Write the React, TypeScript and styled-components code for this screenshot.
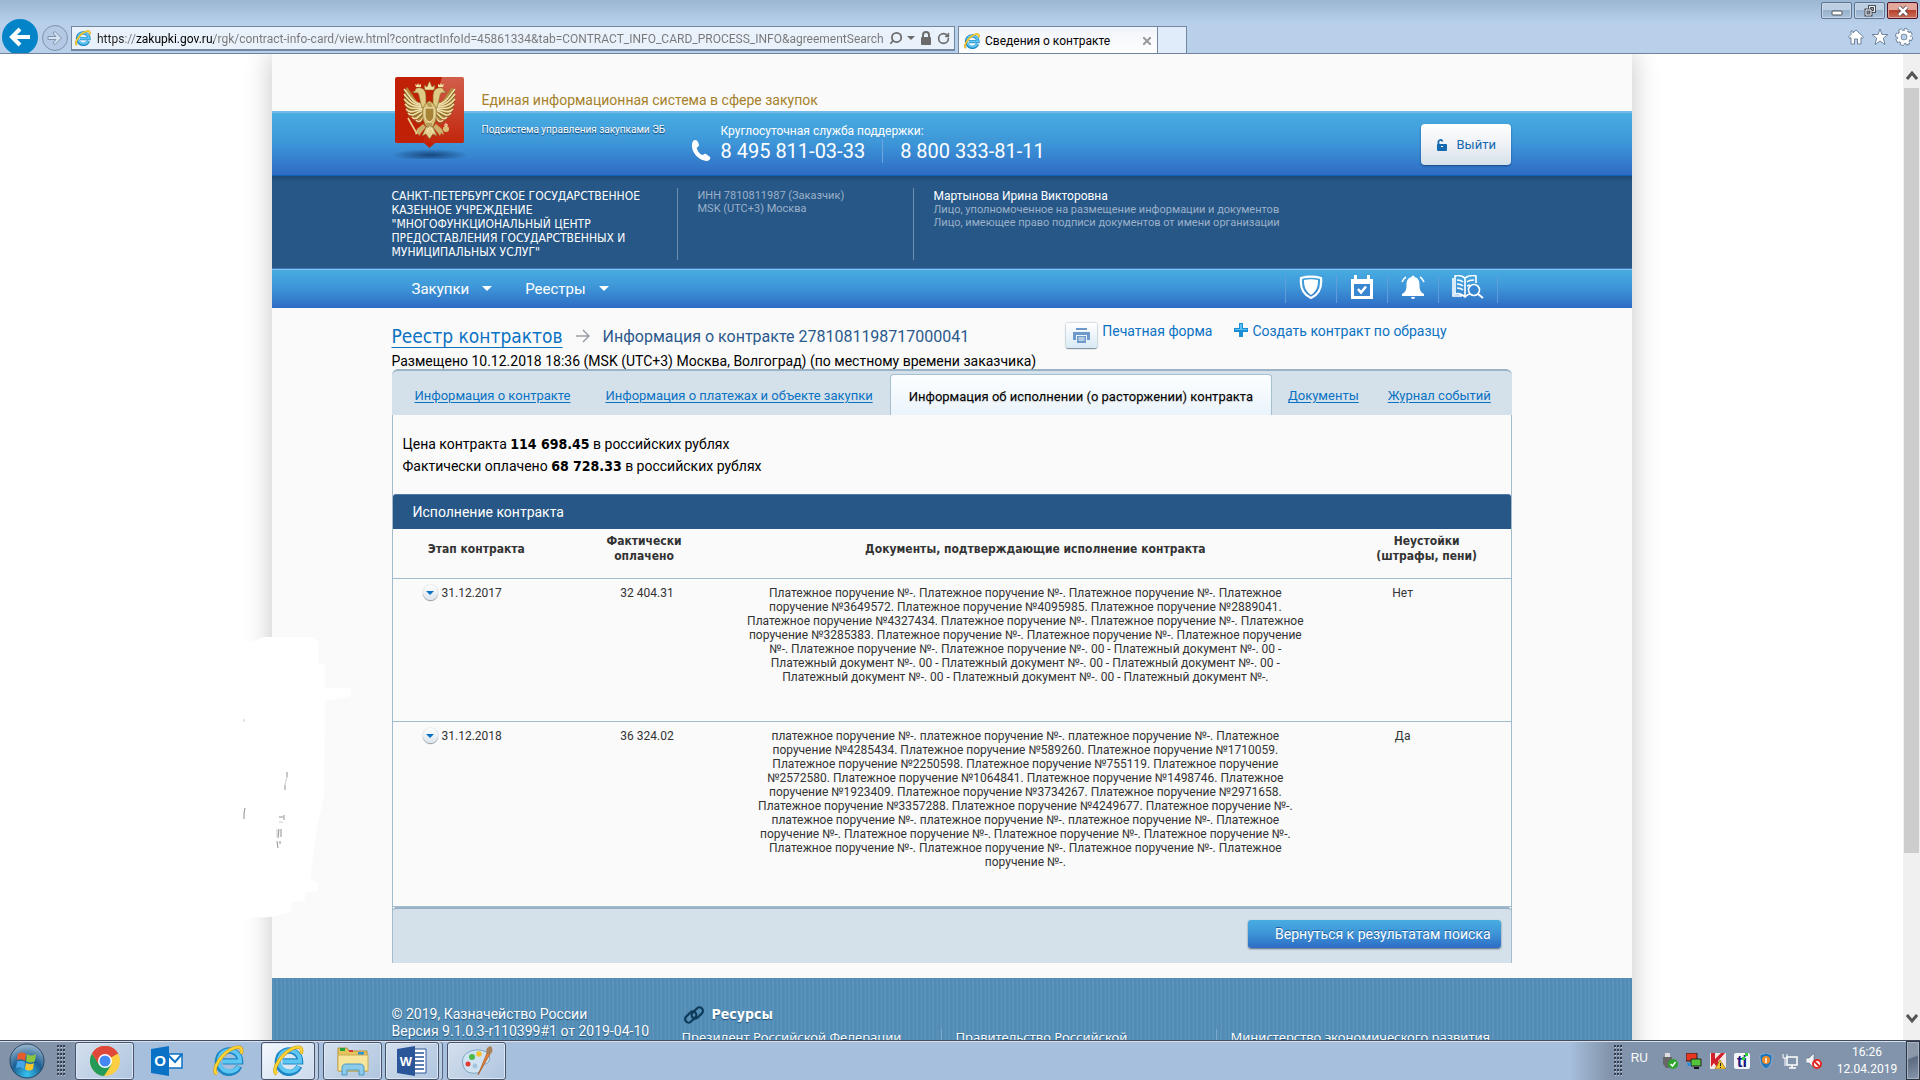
import React from "react";
import styled, { createGlobalStyle, css } from "styled-components";
import { Search, RotateCw } from "lucide-react";

const wide = '"DejaVu Sans Condensed", "DejaVu Sans", sans-serif';
const text = 'Roboto, "Open Sans", sans-serif';
const alt = '"Liberation Sans", Arial, sans-serif';
const sky = "linear-gradient(#48ade1, #3e97d8 45%, #2e6cc5)";

const Global = createGlobalStyle`
  * { box-sizing: border-box; }
  body { margin: 0; font-family: ${text}; font-size: 12px; color: #000; background: #fff; }
  button { font: inherit; border: 0; padding: 0; cursor: pointer; background: none; color: inherit; }
  svg { display: block; flex: none; }
  b, th { font-family: ${wide}; }
`;

const Screen = styled.div`
  display: flex;
  flex-direction: column;
  height: 100vh;
  overflow: hidden;
`;

/* ---------- browser frame ---------- */
const Chrome = styled.header`
  flex: none;
  background: linear-gradient(#9bb7d2, #b9d0eb 24px);
  border-bottom: 1px solid #71839b;
`;
const WindowControls = styled.div`
  display: flex;
  justify-content: flex-end;
  gap: 2px;
  height: 19px;
  padding: 2px 2px 0;
`;
const WindowButton = styled.button<{ $close?: boolean }>`
  display: flex;
  align-items: center;
  justify-content: center;
  width: 31px;
  height: 17px;
  border: 1px solid ${(p) => (p.$close ? "#4c1420" : "#5d7591")};
  border-radius: 2px;
  box-shadow: inset 0 0 0 1px ${(p) => (p.$close ? "#e2a29a" : "#c6d6e8")};
  background: ${(p) =>
    p.$close
      ? "linear-gradient(#e4a79c 45%, #b8412c 50%, #c9705c)"
      : "linear-gradient(#bccfe3 45%, #98b1cb 50%, #a9c3de)"};
`;
const BrowserBar = styled.div`
  display: flex;
  height: 34px;
  overflow: hidden;
`;
const BackButton = styled.button`
  flex: none;
  width: 36px;
  height: 36px;
  margin-left: 2px;
  border-radius: 50%;
  background: #0383c8;
  display: grid;
  place-items: center;
`;
const ForwardButton = styled.button`
  flex: none;
  width: 26px;
  height: 26px;
  margin: 6px 3px 0 4px;
  border: 1px solid #7e93ae;
  border-radius: 50%;
  background: #b4c9e3;
  display: grid;
  place-items: center;
`;
const AddressBar = styled.form`
  flex: 0 1 884px;
  display: flex;
  align-items: center;
  gap: 4px;
  height: 25px;
  margin-top: 7px;
  padding: 0 4px 0 3px;
  border: 1px solid #7487a0;
  border-bottom-width: 2px;
  background: #e9f1fb;
  color: #6b6b6b;
`;
const AddressInput = styled.input`
  flex: 1;
  min-width: 0;
  padding: 2px 0 0 2px;
  border: 0;
  outline: 0;
  font: 12px ${text};
  color: transparent;
  background: linear-gradient(90deg, #222 29px, #777 29px, #777 41px, #000 41px, #000 119px, #777 119px);
  background-clip: text;
`;
const FlippedSearch = styled(Search)`
  transform: scaleX(-1);
`;
const BrowserTab = styled.div`
  display: flex;
  align-items: center;
  gap: 5px;
  flex: 0 1 200px;
  height: 28px;
  margin: 7px 0 0 3px;
  padding: 0 6px 0 5px;
  border: 1px solid #7487a0;
  border-bottom: 0;
  background: linear-gradient(#f0f4fb, #fff);
  button { margin-left: auto; }
`;
const NewTab = styled.button`
  width: 29px;
  height: 28px;
  margin-top: 7px;
  border: 1px solid #7487a0;
  border-left: 0;
  background: #e0ecf9;
`;
const BrowserTools = styled.div`
  display: flex;
  align-items: center;
  gap: 6px;
  margin-left: auto;
  padding: 2px 7px 0 0;
`;

/* ---------- page frame ---------- */
const Viewport = styled.div`
  flex: 1;
  min-height: 0;
  display: flex;
  overflow: hidden;
`;
const Canvas = styled.div`
  position: relative;
  flex: 1;
  min-width: 0;
  background: #fff;
`;
const Page = styled.div`
  max-width: 1360px;
  margin: 0 auto;
  background: #fafafa;
  box-shadow: 0 0 26px rgba(0, 0, 0, 0.24);
`;
const Inner = styled.div`
  max-width: 1120px;
  margin: 0 auto;
`;
const Scrollbar = styled.div`
  flex: none;
  width: 17px;
  display: flex;
  flex-direction: column;
  align-items: center;
  padding: 14px 0;
  background: #f0f0f0;
`;
const ScrollThumb = styled.div`
  width: 15px;
  flex: 0 1 765px;
  margin: 4px 0 auto;
  background: #cdcdcd;
`;
const Smudge = styled.svg`
  position: absolute;
  left: 230px;
  top: 576px;
`;

/* ---------- site header ---------- */
const Masthead = styled.div`
  background: linear-gradient(#fafafa 57px, #70bbe7 57px, #70bbe7 59px, #48ade1 59px, #3e97d8 88px, #2e6cc5 121px, #0c62b2 121px);
`;
const MastheadRow = styled(Inner)`
  display: flex;
  height: 122px;
`;
const LogoBox = styled.div`
  width: 82px;
  padding-top: 23px;
`;
const Brand = styled.div`
  padding: 37px 0 0 8px;
  color: #fff;
`;
const BrandTitle = styled.div`
  font-size: 14px;
  line-height: 18px;
  color: #a5812b;
`;
const BrandRow = styled.div`
  display: flex;
  padding-top: 13px;
`;
const Subsystem = styled.div`
  width: 209px;
  padding-top: 1px;
  font-size: 10px;
  line-height: 14px;
  text-shadow: 0 1px 1px #0a3c70;
`;
const PhoneIcon = styled.svg`
  margin-top: 17px;
`;
const Support = styled.div`
  margin: 1px 0 0 10px;
  line-height: 16px;
`;
const Phones = styled.div`
  display: flex;
  font-size: 20px;
  line-height: 24px;
  span + span {
    margin-left: 17px;
    padding-left: 17px;
    border-left: 1px solid #6fa5e0;
  }
`;
const LogoutButton = styled.button`
  display: flex;
  align-items: center;
  gap: 10px;
  width: 90px;
  height: 41px;
  margin: 70px 1px 0 auto;
  padding-left: 15px;
  border-radius: 4px;
  font-size: 13px;
  color: #1469b0;
  background: linear-gradient(#fff, #eef1f6 50%, #d5e2ea);
  box-shadow: 0 1px 2px rgba(0, 40, 90, 0.6);
`;
const UserBar = styled.div`
  background: linear-gradient(#1f4974, #265787 6px);
  color: #fff;
`;
const UserRow = styled(Inner)`
  display: flex;
  padding: 12px 0 8px;
`;
const UserCell = styled.div<{ $w?: number }>`
  ${(p) => p.$w && css`width: ${p.$w}px;`}
  min-height: 72px;
  padding-top: 1px;
  line-height: 14px;
  & + & {
    padding-left: 20px;
    border-left: 1px solid #6e8fb0;
  }
`;
const OrgName = styled.div`
  max-width: 262px;
  font-family: ${wide};
`;
const Muted = styled.div`
  font-size: 11px;
  line-height: 13px;
  color: #9cb1c9;
`;
const NavBar = styled.nav`
  border-top: 1px solid #3c78bb;
  box-shadow: inset 0 1px #86c2ef;
  background: ${sky};
`;
const NavRow = styled(Inner)`
  display: flex;
  align-items: center;
  height: 39px;
  padding: 0 14px 0 20px;
`;
const NavItem = styled.button`
  display: flex;
  align-items: center;
  gap: 13px;
  margin-right: 33px;
  font-size: 15px;
  color: #fff;
`;
const NavIcons = styled.div`
  display: flex;
  margin-left: auto;
`;
const NavIcon = styled.button<{ $w: number }>`
  display: flex;
  justify-content: center;
  width: ${(p) => p.$w}px;
  height: 28px;
  border-left: 1px solid #5f9edb;
  &:last-child { border-right: 1px solid #5f9edb; }
`;

/* ---------- contract card ---------- */
const HeadingRow = styled.div`
  display: flex;
  height: 46px;
  padding: 15px 65px 0 0;
`;
const Crumbs = styled.div`
  display: flex;
  align-items: center;
  gap: 13px;
  height: 26px;
  font-size: 16px;
  color: #2a598c;
`;
const CrumbLink = styled.a`
  font-family: ${wide};
  font-size: 19px;
  color: #0a72c3;
  text-underline-offset: 4px;
`;
const Actions = styled.div`
  display: flex;
  gap: 22px;
  margin-left: auto;
  font-size: 14px;
  line-height: 17px;
`;
const Action = styled.a<{ $gap: number }>`
  display: flex;
  gap: ${(p) => p.$gap}px;
  color: #0a72c3;
  text-decoration: none;
`;
const PrintTile = styled.span`
  display: grid;
  place-items: center;
  width: 31px;
  height: 25px;
  border-radius: 2px;
  background: linear-gradient(#fff, #d8eaf5);
  box-shadow: 0 0 2px #8c99a5, 0 1px 1px #7f8b96;
`;
const Placed = styled.div`
  font-size: 14px;
  line-height: 15px;
`;
const Tabs = styled.div`
  display: flex;
  height: 46px;
  padding: 3px 0 0 23px;
  border-top: 2px solid #9bb4c5;
  border-radius: 6px 6px 0 0;
  background: #d5e1ea;
  font-size: 13px;
`;
const Tab = styled.a<{ $gap: number }>`
  margin-right: ${(p) => p.$gap}px;
  line-height: 43px;
  color: #0a72c3;
  text-underline-offset: 2px;
  white-space: nowrap;
`;
const ActiveTab = styled.div`
  margin: 0 16px 0 -18px;
  padding: 0 18px;
  border: 1px solid #a6bfce;
  border-bottom: 0;
  border-radius: 4px 4px 0 0;
  background: linear-gradient(#fcfeff, #eaf4fb);
  line-height: 43px;
  white-space: nowrap;
  text-shadow: 0 1px 1px #bbb;
`;
const Card = styled.div`
  border: solid #a3bccb;
  border-width: 0 1px;
`;
const Totals = styled.div`
  padding: 18px 10px 17px;
  font-size: 14px;
  line-height: 22px;
`;
const SectionTitle = styled.h2`
  margin: 0;
  padding-left: 20px;
  border-top: 1px solid #4c7ba5;
  border-radius: 3px 3px 0 0;
  background: #265787;
  color: #fff;
  font-size: 14px;
  font-weight: 400;
  line-height: 34px;
`;
const Table = styled.table`
  width: 100%;
  table-layout: fixed;
  border-collapse: collapse;
  color: #333;
  text-align: center;
`;
const Th = styled.th`
  padding: 5px 30px 14px;
  border-bottom: 1px solid #a3bccb;
  line-height: 15px;
  &:nth-child(3), &:last-child { padding: 5px 0 14px; }
`;
const Td = styled.td`
  padding: 7px 0 37px;
  border-bottom: 1px solid #a3bccb;
  line-height: 14px;
  vertical-align: top;
  white-space: nowrap;
  &:nth-child(2) { padding-left: 6px; }
  &:nth-child(3) { padding-right: 20px; }
  &:last-child { padding-right: 48px; }
`;
const Stage = styled.div`
  display: flex;
  align-items: center;
  gap: 4px;
  height: 13px;
  padding-left: 30px;
`;
const Toggle = styled.button`
  display: grid;
  place-items: center;
  width: 15px;
  height: 15px;
  border-radius: 50%;
  background: linear-gradient(#fff, #dde5ec);
  box-shadow: 0 1px 1px #8a949c, 0 0 1px #8a949c;
`;
const CardFooter = styled.div`
  display: flex;
  justify-content: flex-end;
  height: 56px;
  padding: 11px 10px 0;
  border-top: 2px solid #98b2c3;
  border-radius: 4px 4px 0 0;
  background: #d5e1ea;
`;
const ReturnButton = styled.button`
  height: 28px;
  padding: 0 10px 0 27px;
  border-radius: 3px;
  background: ${sky};
  box-shadow: 0 1px 2px #5a6b7d;
  color: #fff;
  font-size: 14px;
  text-shadow: 0 -1px #1f5a9c;
`;
const SiteFooter = styled.footer`
  height: 120px;
  margin-top: 15px;
  padding-top: 28px;
  background: repeating-linear-gradient(90deg, #568fb8 0 3px, #4e89b2 3px 4px, #5a94bc 4px 6px, #528cb5 6px 8px);
  color: #fff;
  font-size: 14px;
  line-height: 17px;
  text-shadow: 0 1px 1px #1c4f78;
`;
const FooterRow = styled(Inner)`
  display: grid;
  grid-template-columns: 290px 1fr;
`;
const Resources = styled.b`
  display: flex;
  align-items: center;
  gap: 7px;
  height: 17px;
  margin-bottom: 6px;
`;
const FooterLinks = styled.div`
  display: grid;
  grid-template-columns: 259px 275px 1fr;
  font-family: "Noto Sans", "Open Sans", sans-serif;
  font-size: 13px;
  a { color: #fff; text-decoration: none; white-space: nowrap; }
  a + a { padding-left: 14px; border-left: 1px solid #78aace; }
`;

/* ---------- taskbar ---------- */
const Taskbar = styled.footer`
  flex: none;
  display: flex;
  align-items: center;
  height: 40px;
  border-top: 1px solid #444b5c;
  box-shadow: inset 0 1px #d6e1ef;
  background: linear-gradient(90deg, #8293aa 70px, #a6bfdc 115px, #a6bfdc calc(100% - 350px), #8294ab calc(100% - 310px));
`;
const StartButton = styled.button`
  margin: 0 12px 0 9px;
`;
const TaskButtons = styled.div`
  display: flex;
  gap: 3px;
  margin-left: 9px;
`;
const TaskButton = styled.button<{ $open?: boolean; $active?: boolean; $stack?: boolean }>`
  display: grid;
  place-items: center;
  width: 59px;
  height: 38px;
  border-radius: 3px;
  ${(p) =>
    p.$open &&
    css`
      border: 1px solid #47536a;
      box-shadow: inset 0 0 0 1px #dce7f3;
      background: ${p.$active
        ? "linear-gradient(135deg, #f4f8fc, #c9d9ec)"
        : "linear-gradient(135deg, #d3dfed, #afc5df)"};
    `}
  ${(p) =>
    p.$stack &&
    css`
      width: 54px;
      margin-right: 5px;
      box-shadow: inset 0 0 0 1px #dce7f3, 3px 0 #b7cbe2, 4px 0 #596780;
    `}
`;
const Tray = styled.div`
  display: flex;
  align-items: center;
  margin-left: auto;
  height: 100%;
  color: #fff;
`;
const Language = styled.span`
  margin: -6px 14px 0 8px;
  font: 12px ${alt};
`;
const TrayIcons = styled.div`
  display: flex;
  gap: 8px;
`;
const Clock = styled.time`
  width: 70px;
  margin: 0 4px 0 10px;
  line-height: 17px;
  text-align: center;
`;
const ShowDesktop = styled.button`
  width: 14px;
  height: 100%;
  border: 1px solid #2e3542;
  box-shadow: inset 0 0 0 1px #a6b3c4;
  background: linear-gradient(160deg, #8a98aa 40%, #5d6b80 45%, #8696ab);
`;

/* ---------- drawings ---------- */
const IeLogo = ({ size = 16 }: { size?: number }) => (
  <svg width={size} height={size} viewBox="0 0 32 32" fill="none">
    <path d="M27 22a11.500 11.500 0 1 1 1-5H10" stroke="#1d86c4" strokeWidth="6.500" />
    <path d="M26.500 22a11 11 0 1 1 1.500-5H10" stroke="#5ec6f2" strokeWidth="4" />
    <path d="M4 30C-3 26 10 7 22 3c6-2 9 0 7 6" stroke="#c99712" strokeWidth="3.600" />
    <path d="M4 30C-3 26 10 7 22 3c6-2 9 0 7 6" stroke="#fcd437" strokeWidth="2.400" />
  </svg>
);

const featherTips = [[9, 12], [9, 17], [9, 22], [10, 27], [11, 32], [13, 36], [17, 40], [21, 43]];

const EagleHalf = () => (
  <g>
    <path d="M12 10c-2 3-3 8-2 13 1 9 6 16 14 21l8-9-4-16-4 7c-3-2-7-9-12-16z" fill="#b08c3c" />
    {featherTips.map(([x, y], i) => (
      <g key={i}>
        <path d={`M${x} ${y}C${x + 5} ${y + 6} ${x + 9} ${28 + i} 31 ${28 + i}`} stroke="#efe0ac" strokeWidth="1.600" />
        <path d={`M${x} ${y + 2}C${x + 5} ${y + 8} ${x + 9} ${30 + i} 31 ${30 + i}`} stroke="#80601f" strokeWidth="1" />
      </g>
    ))}
    <path d="M31 32V20c0-4-1-8-5-9-3-1-6 0-6 3l-3 1 3 1c2-1 4 0 4 3l3 12z" fill="#dfc985" stroke="#80601f" strokeWidth="0.600" />
    <path d="M21 10l-1-3 2 1 1-2 1 2 2-1v3z" fill="#f0dfa2" />
    <path d="M28 47l-6 5-2 6 3-2 1 3 2-3 5-6z" fill="#cbb069" />
  </g>
);

const Emblem = () => (
  <svg width="82" height="82" viewBox="-3 0 82 82" fill="none">
    <defs>
      <radialGradient id="drop">
        <stop offset="0" stopColor="#113c70" stopOpacity=".85" />
        <stop offset="1" stopColor="#113c70" stopOpacity="0" />
      </radialGradient>
      <linearGradient id="shine" x1="0" y1="0" x2="0" y2="1">
        <stop offset="0" stopColor="#fff" stopOpacity=".55" />
        <stop offset="1" stopColor="#fff" stopOpacity=".05" />
      </linearGradient>
    </defs>
    <ellipse cx="35" cy="78" rx="38" ry="6" fill="url(#drop)" />
    <path d="M2 0h65a2 2 0 0 1 2 2v62a2 2 0 0 1-2 2H40l-5.500 5-5.500-5H2a2 2 0 0 1-2-2V2a2 2 0 0 1 2-2z" fill="#c02106" />
    <path d="M47 0h20a2 2 0 0 1 2 2v62a2 2 0 0 1-2 2H28z" fill="url(#shine)" opacity=".5" />
    <EagleHalf />
    <g transform="matrix(-1 0 0 1 69 0)"><EagleHalf /></g>
    <path d="M34.500 24c-5 2-8 8-7 15 1 6 3 11 7 14 4-3 6-8 7-14 1-7-2-13-7-15z" fill="#d8bf78" stroke="#80601f" strokeWidth="0.600" />
    <path d="M30 31h9v8c0 3-2 5-4.500 6-2.500-1-4.500-3-4.500-6z" fill="#a88436" stroke="#f4e7bb" />
    <path d="M30 13l-1-5 3 2 2.500-6 2.500 6 3-2-1 5z" fill="#f0dfa2" stroke="#80601f" strokeWidth="0.500" />
    <path d="M31 50l-4 9 4-2 3.500 5 3.500-5 4 2-4-9z" fill="#e3cf90" stroke="#80601f" strokeWidth="0.600" />
    <path d="M13 41l9 16" stroke="#e3cf90" strokeWidth="1.600" />
    <circle cx="51" cy="52" r="3" fill="#d8bf78" />
    <path d="M51 46v4m-2-2h4M32 55l3-6 3 6" stroke="#f4e7bb" />
    <path d="M32 27h4M33 29h4M31 47h6M32 49h5" stroke="#80601f" strokeWidth="0.700" />
  </svg>
);

const Caret = ({ color = "#fff", w = 10 }: { color?: string; w?: number }) => (
  <svg width={w} height={w / 2} viewBox="0 0 10 5"><path d="M0 0h10L5 5z" fill={color} /></svg>
);

const Grip = () => (
  <svg width="9" height="32" viewBox="0 0 9 32">
    {[0, 1, 2, 3, 4, 5, 6, 7].map((r) =>
      [0, 1, 2].map((c) => (
        <g key={`${r}-${c}`}>
          <rect x={c * 3 + 1} y={r * 4 + 1} width="1" height="2" fill="#c3cedb" />
          <rect x={c * 3} y={r * 4} width="2" height="2" fill="#343e4e" />
        </g>
      ))
    )}
  </svg>
);

/* ---------- data ---------- */
const stages = [
  {
    date: "31.12.2017",
    paid: "32 404.31",
    penalty: "Нет",
    docs: [
      "Платежное поручение №-. Платежное поручение №-. Платежное поручение №-. Платежное",
      "поручение №3649572. Платежное поручение №4095985. Платежное поручение №2889041.",
      "Платежное поручение №4327434. Платежное поручение №-. Платежное поручение №-. Платежное",
      "поручение №3285383. Платежное поручение №-. Платежное поручение №-. Платежное поручение",
      "№-. Платежное поручение №-. Платежное поручение №-. 00 - Платежный документ №-. 00 -",
      "Платежный документ №-. 00 - Платежный документ №-. 00 - Платежный документ №-. 00 -",
      "Платежный документ №-. 00 - Платежный документ №-. 00 - Платежный документ №-.",
    ],
  },
  {
    date: "31.12.2018",
    paid: "36 324.02",
    penalty: "Да",
    docs: [
      "платежное поручение №-. платежное поручение №-. платежное поручение №-. Платежное",
      "поручение №4285434. Платежное поручение №589260. Платежное поручение №1710059.",
      "Платежное поручение №2250598. Платежное поручение №755119. Платежное поручение",
      "№2572580. Платежное поручение №1064841. Платежное поручение №1498746. Платежное",
      "поручение №1923409. Платежное поручение №3734267. Платежное поручение №2971658.",
      "Платежное поручение №3357288. Платежное поручение №4249677. Платежное поручение №-.",
      "платежное поручение №-. платежное поручение №-. платежное поручение №-. Платежное",
      "поручение №-. Платежное поручение №-. Платежное поручение №-. Платежное поручение №-.",
      "Платежное поручение №-. Платежное поручение №-. Платежное поручение №-. Платежное",
      "поручение №-.",
    ],
  },
];

const BrowserFrame = () => (
  <Chrome>
    <WindowControls>
      <WindowButton aria-label="Свернуть">
        <svg width="12" height="12"><rect x="1" y="6" width="10" height="4" rx="1" fill="#fff" stroke="#4b4f58" /></svg>
      </WindowButton>
      <WindowButton aria-label="Восстановить">
        <svg width="12" height="12" fill="none">
          <path d="M5.500 1.500h5v5h-5z" stroke="#4b4f58" strokeWidth="3" /><path d="M5.500 1.500h5v5h-5z" stroke="#fff" />
          <path d="M2 5h5v5H2z" fill="#7d93ad" stroke="#4b4f58" strokeWidth="3" /><path d="M2 5h5v5H2z" stroke="#fff" />
        </svg>
      </WindowButton>
      <WindowButton $close aria-label="Закрыть">
        <svg width="12" height="12"><path d="M2 2l8 8M10 2l-8 8" stroke="#4b3c46" strokeWidth="4" /><path d="M2 2l8 8M10 2l-8 8" stroke="#fff" strokeWidth="2.500" /></svg>
      </WindowButton>
    </WindowControls>
    <BrowserBar>
      <BackButton aria-label="Назад">
        <svg width="22" height="20" viewBox="0 0 22 20" fill="none" stroke="#fff" strokeWidth="4"><path d="M3 10h18M11 2l-8 8 8 8" /></svg>
      </BackButton>
      <ForwardButton aria-label="Вперед">
        <svg width="16" height="16" viewBox="0 0 16 16" fill="#d5e2f1" stroke="#7e93ae"><path d="M1 6.500h8L6 3l2-1.500L14.500 8 8 14.500 6 13l3-3.500H1z" /></svg>
      </ForwardButton>
      <AddressBar>
        <IeLogo />
        <AddressInput
          aria-label="Адрес"
          readOnly
          value="https://zakupki.gov.ru/rgk/contract-info-card/view.html?contractInfoId=45861334&tab=CONTRACT_INFO_CARD_PROCESS_INFO&agreementSearch"
        />
        <FlippedSearch size={14} strokeWidth={3} />
        <Caret color="#6b6b6b" w={8} />
        <svg width="14" height="14" viewBox="3 0 14 14"><rect x="5" y="6" width="10" height="8" rx="1" fill="#6b6b6b" /><path d="M7 7V4a3 3 0 0 1 6 0v3" fill="none" stroke="#6b6b6b" strokeWidth="2" /></svg>
        <RotateCw size={13} strokeWidth={3} />
      </AddressBar>
      <BrowserTab>
        <IeLogo />
        <span>Сведения о контракте</span>
        <button aria-label="Закрыть вкладку">
          <svg width="8" height="8"><path d="M0 0l8 8M8 0L0 8" stroke="#999" strokeWidth="2" /></svg>
        </button>
      </BrowserTab>
      <NewTab aria-label="Новая вкладка" />
      <BrowserTools>
        <button aria-label="Домой">
          <svg width="18" height="18" viewBox="0 0 18 18" fill="#fff" stroke="#71849d"><path d="M9 2l7.500 7-1 1.500L14 9.500V16h-3.500v-5h-3v5H4V9.500l-1.500 1L1.500 9 4 6.500V3h2v2z" /></svg>
        </button>
        <button aria-label="Избранное">
          <svg width="18" height="18" viewBox="0 0 18 18" fill="#fff" stroke="#71849d"><path d="M9 1l2 5.500h6l-4.700 3.700L14 16.500 9 13l-5 3.500 1.700-6.300L1 6.500h6z" /></svg>
        </button>
        <button aria-label="Сервис">
          <svg width="18" height="18" viewBox="0 0 18 18" fill="none">
            <circle cx="9" cy="9" r="7" stroke="#71849d" strokeWidth="4" strokeDasharray="3.500 2" /><circle cx="9" cy="9" r="5" stroke="#71849d" strokeWidth="5" />
            <circle cx="9" cy="9" r="6.500" stroke="#fff" strokeWidth="3" strokeDasharray="2.600 2.500" /><circle cx="9" cy="9" r="4.800" stroke="#fff" strokeWidth="3" />
          </svg>
        </button>
      </BrowserTools>
    </BrowserBar>
  </Chrome>
);

const SiteHeader = () => (
  <>
    <Masthead>
      <MastheadRow>
        <LogoBox><Emblem /></LogoBox>
        <Brand>
          <BrandTitle>Единая информационная система в сфере закупок</BrandTitle>
          <BrandRow>
            <Subsystem>Подсистема управления закупками ЭБ</Subsystem>
            <PhoneIcon width="20" height="22" viewBox="0 0 20 22">
              <path d="M2 2c2-2 4-1 5 1l1 3c0 2-3 2-2 4 1 3 3 5 5 6 2 0 2-2 4-1l4 3c1 2-1 4-4 4C8 21 0 14 1 5z" fill="#fff" />
            </PhoneIcon>
            <Support>
              Круглосуточная служба поддержки:
              <Phones><span>8 495 811-03-33</span><span>8 800 333-81-11</span></Phones>
            </Support>
          </BrandRow>
        </Brand>
        <LogoutButton>
          <svg width="11" height="12" viewBox="0 0 11 12"><rect x="1" y="5" width="10" height="7" rx="1" fill="#1469b0" /><path d="M2.500 6V3.500a2 2 0 0 1 4-1" fill="none" stroke="#1469b0" strokeWidth="1.800" /><rect x="5" y="7" width="2" height="1" fill="#fff" /></svg>
          Выйти
        </LogoutButton>
      </MastheadRow>
    </Masthead>
    <UserBar>
      <UserRow>
        <UserCell $w={285}>
          <OrgName>САНКТ-ПЕТЕРБУРГСКОЕ ГОСУДАРСТВЕННОЕ КАЗЕННОЕ УЧРЕЖДЕНИЕ "МНОГОФУНКЦИОНАЛЬНЫЙ ЦЕНТР ПРЕДОСТАВЛЕНИЯ ГОСУДАРСТВЕННЫХ И МУНИЦИПАЛЬНЫХ УСЛУГ"</OrgName>
        </UserCell>
        <UserCell $w={236}>
          <Muted>ИНН 7810811987 (Заказчик)</Muted>
          <Muted>MSK (UTC+3) Москва</Muted>
        </UserCell>
        <UserCell>
          <div>Мартынова Ирина Викторовна</div>
          <Muted>Лицо, уполномоченное на размещение информации и документов</Muted>
          <Muted>Лицо, имеющее право подписи документов от имени организации</Muted>
        </UserCell>
      </UserRow>
    </UserBar>
    <NavBar>
      <NavRow>
        <NavItem>Закупки <Caret /></NavItem>
        <NavItem>Реестры <Caret /></NavItem>
        <NavIcons>
          <NavIcon $w={51} aria-label="Контроль">
            <svg width="24" height="24" viewBox="0 0 24 24"><path d="M2 3c7-2 13-2 20 0 1 9-1 16-10 20C3 19 1 12 2 3z" fill="none" stroke="#fff" strokeWidth="2.200" /><path d="M5 5c5-1 9-1 14 0 0 6-1 11-7 15C6 16 5 11 5 5z" fill="#fff" /></svg>
          </NavIcon>
          <NavIcon $w={51} aria-label="Календарь">
            <svg width="24" height="24" viewBox="0 0 24 24"><path d="M1 4h3V0h3v4h10V0h3v4h3v20H1z" fill="#fff" /><path d="M4 9h16v12H4z" fill="#3986d1" /><path d="M8 14l3 3.500 5-6" fill="none" stroke="#fff" strokeWidth="2.600" /></svg>
          </NavIcon>
          <NavIcon $w={51} aria-label="Уведомления">
            <svg width="24" height="24" viewBox="0 0 24 24" fill="#fff"><path d="M10.500 2a1.500 1.500 0 0 1 3 0c4 1 5 4 5 8 0 5 1 7 4.500 9v2H1v-2c3.500-2 4.500-4 4.500-9 0-4 1-7 5-8zM10 22h4a2 2 0 0 1-4 0z" /><path d="M5 2C3 3 2 5 1 7m18-5c2 1 3 3 4 5" stroke="#fff" strokeWidth="1.600" fill="none" /></svg>
          </NavIcon>
          <NavIcon $w={60} aria-label="Справочник">
            <svg width="32" height="24" viewBox="0 0 32 24" fill="none" stroke="#fff" strokeWidth="1.600"><path d="M13 3C10 1 6 0 3 1v18c4-1 7 0 10 3 2-2 4-3 5-3M13 3v19M13 3c3-2 7-3 11-2v7M1 3v18h9M5 5c2 0 4 0 6 2M5 9c2 0 4 0 6 2M5 13c2 0 4 0 6 2M15 7c2-2 4-2 7-2M15 11l3-1" /><circle cx="22" cy="15" r="5.500" fill="#3986d1" /><path d="M26 19l5 4" strokeWidth="2" /></svg>
          </NavIcon>
        </NavIcons>
      </NavRow>
    </NavBar>
  </>
);

const ContractCard = () => (
  <Inner as="main">
    <HeadingRow>
      <Crumbs>
        <CrumbLink href="#registry">Реестр контрактов</CrumbLink>
        <svg width="14" height="14" viewBox="0 0 14 14" fill="none" stroke="#9aa0a5" strokeWidth="1.500"><path d="M0 7h13M7 1l6 6-6 6" /></svg>
        <span>Информация о контракте 2781081198717000041</span>
      </Crumbs>
      <Actions>
        <Action $gap={5} href="#print">
          <PrintTile>
            <svg width="17" height="15" viewBox="0 0 17 15" fill="#6d9acb"><path d="M3 0h11v2H3zM0 4h17v8h-3V7H3v5H0z" /><path d="M4 8h9v7H4z" /><path d="M5.500 10h6M5.500 12h6" stroke="#fff" /></svg>
          </PrintTile>
          Печатная форма
        </Action>
        <Action $gap={4} href="#create">
          <svg width="14" height="14" viewBox="0 0 14 14"><path d="M5 0h4v5h5v4H9v5H5V9H0V5h5z" fill="#1b8fd6" /><path d="M6 1h2v5h5v1H1V6h5z" fill="#5cc0f0" /></svg>
          Создать контракт по образцу
        </Action>
      </Actions>
    </HeadingRow>
    <Placed>Размещено 10.12.2018 18:36 (MSK (UTC+3) Москва, Волгоград) (по местному времени заказчика)</Placed>
    <Tabs>
      <Tab $gap={35} href="#info">Информация о контракте</Tab>
      <Tab $gap={35} href="#payments">Информация о платежах и объекте закупки</Tab>
      <ActiveTab>Информация об исполнении (о расторжении) контракта</ActiveTab>
      <Tab $gap={29} href="#docs">Документы</Tab>
      <Tab $gap={0} href="#log">Журнал событий</Tab>
    </Tabs>
    <Card>
      <Totals>
        <div>Цена контракта <b>114 698.45</b> в российских рублях</div>
        <div>Фактически оплачено <b>68 728.33</b> в российских рублях</div>
      </Totals>
      <SectionTitle>Исполнение контракта</SectionTitle>
      <Table>
        <colgroup>
          <col width="15%" /><col width="15%" /><col width="55%" /><col width="15%" />
        </colgroup>
        <thead>
          <tr>
            <Th>Этап контракта</Th>
            <Th>Фактически оплачено</Th>
            <Th>Документы, подтверждающие исполнение контракта</Th>
            <Th>Неустойки<br />(штрафы, пени)</Th>
          </tr>
        </thead>
        <tbody>
          {stages.map((s) => (
            <tr key={s.date}>
              <Td><Stage><Toggle aria-label="Развернуть"><Caret color="#0a72c3" w={8} /></Toggle>{s.date}</Stage></Td>
              <Td>{s.paid}</Td>
              <Td>{s.docs.map((line, i) => <div key={i}>{line}</div>)}</Td>
              <Td>{s.penalty}</Td>
            </tr>
          ))}
        </tbody>
      </Table>
      <CardFooter><ReturnButton>Вернуться к результатам поиска</ReturnButton></CardFooter>
    </Card>
  </Inner>
);

const PageFooter = () => (
  <SiteFooter>
    <FooterRow>
      <div>© 2019, Казначейство России<br />Версия 9.1.0.3-r110399#1 от 2019-04-10</div>
      <div>
        <Resources>
          <svg width="23" height="18" viewBox="0 0 23 18" fill="none" stroke="#0d3a59" strokeWidth="2.200"><rect x="-6" y="-3" width="13" height="7" rx="3.500" transform="translate(8 11) rotate(-45)" /><rect x="-7" y="-4" width="13" height="7" rx="3.500" transform="translate(16 7) rotate(-45)" /></svg>
          Ресурсы
        </Resources>
        <FooterLinks>
          <a href="#president">Президент Российской Федерации</a>
          <a href="#government">Правительство Российской</a>
          <a href="#economy">Министерство экономического развития</a>
        </FooterLinks>
      </div>
    </FooterRow>
  </SiteFooter>
);

const TaskbarArea = () => (
  <Taskbar>
    <StartButton aria-label="Пуск">
      <svg width="36" height="36" viewBox="0 0 36 36">
        <defs><radialGradient id="orb" cx=".5" cy=".9" r=".9"><stop offset="0" stopColor="#35c5f0" /><stop offset=".5" stopColor="#1c5f94" /><stop offset="1" stopColor="#9fb9cf" /></radialGradient></defs>
        <circle cx="18" cy="18" r="17" fill="url(#orb)" stroke="#2c4662" />
        <path d="M9 11c3-2 5-2 8 0l-1 7c-3-2-5-2-8-1z" fill="#e85b2a" /><path d="M18 11c3 2 6 2 9 0l-1 7c-3 2-6 2-9 0z" fill="#8cc63f" />
        <path d="M8 19c3-2 5-1 8 0l-1 7c-3-2-5-2-8-1z" fill="#45a5e6" /><path d="M17 20c3 1 5 2 8 0l-1 6c-3 2-5 2-8 0z" fill="#fbc62d" />
      </svg>
    </StartButton>
    <Grip />
    <TaskButtons>
      <TaskButton $open aria-label="Chrome">
        <svg width="30" height="30" viewBox="0 0 30 30"><circle cx="15" cy="15" r="15" fill="#fcce41" /><path d="M15 15L2 7.500a15 15 0 0 1 26 0z" fill="#e04a3c" /><path d="M2 7.500A15 15 0 0 0 14 30l7.500-11.500L9 18z" fill="#239a57" /><path d="M15 8h13.300A15 15 0 0 0 2 7.500L9 18.500z" fill="#df473a" /><circle cx="15" cy="15" r="7" fill="#fff" /><circle cx="15" cy="15" r="5.500" fill="#4587f3" /></svg>
      </TaskButton>
      <TaskButton aria-label="Outlook">
        <svg width="32" height="30" viewBox="0 0 32 30"><path d="M17 8h14v14H17z" fill="#fff" stroke="#0a72c6" strokeWidth="1.500" /><path d="M17 9l7 7 7-8" fill="none" stroke="#0a72c6" strokeWidth="2" /><path d="M0 3l18-3v30L0 27z" fill="#0a72c6" /><text x="9" y="20" fontSize="15" fontWeight="700" fill="#fff" textAnchor="middle" fontFamily="Liberation Sans">O</text></svg>
      </TaskButton>
      <TaskButton aria-label="Internet Explorer"><IeLogo size={31} /></TaskButton>
      <TaskButton $open $active $stack aria-label="Internet Explorer, окно"><IeLogo size={31} /></TaskButton>
      <TaskButton $open aria-label="Проводник">
        <svg width="34" height="30" viewBox="0 0 34 30"><path d="M2 2h9l2 3h18v20H2z" fill="#e6c45c" stroke="#b3913a" /><path d="M4 2h5v3H4z" fill="#23a33a" /><path d="M13 4h4v2h-4z" fill="#d33" /><path d="M22 6h6v3h-6z" fill="#2b93d8" /><path d="M2 9h30v16H2z" fill="#f8e59c" stroke="#c9aa54" /><path d="M6 29v-7c0-3 2-4 4-4h14c2 0 4 1 4 4v7h-5v-5H11v5z" fill="#8ccbe9" stroke="#4c99c4" /></svg>
      </TaskButton>
      <TaskButton $open $stack aria-label="Word">
        <svg width="30" height="30" viewBox="0 0 30 30"><path d="M15 3h14v24H15z" fill="#fff" stroke="#2a5699" /><path d="M18 7h9M18 11h9M18 15h9M18 19h9M18 23h9" stroke="#2a5699" strokeWidth="1.500" /><path d="M0 3l18-3v30L0 27z" fill="#2a5699" /><text x="9" y="20" fontSize="13" fontWeight="700" fill="#fff" textAnchor="middle" fontFamily="Liberation Sans">W</text></svg>
      </TaskButton>
      <TaskButton $open aria-label="Paint">
        <svg width="34" height="32" viewBox="0 0 34 32"><path d="M3 20C0 10 10 4 20 5c8 1 11 6 9 11-2 4-6 2-7 6-1 5-5 7-10 6-5 0-8-4-9-8z" fill="#cfe3f2" stroke="#7da3c0" /><circle cx="8" cy="19" r="2.500" fill="#e23b34" /><circle cx="12" cy="12" r="3" fill="#4db848" /><circle cx="19" cy="9" r="2.800" fill="#f6c22b" /><circle cx="15" cy="21" r="2.500" fill="#a7c4da" /><path d="M18 30l9-22 3 1z" fill="#e8833a" stroke="#a9541d" strokeWidth=".7" /><path d="M27 8c-2-3 0-6 4-7 2 3 2 7-1 8z" fill="#a9825a" /></svg>
      </TaskButton>
    </TaskButtons>
    <Tray>
      <Grip />
      <Language>RU</Language>
      <TrayIcons>
        <svg width="16" height="16" viewBox="0 0 16 16"><path d="M3 0h5v4H3z" fill="#ddd" /><path d="M1 4h9v7l-3 4H4l-3-4z" fill="#666" /><circle cx="11" cy="11" r="5" fill="#2da52c" /><path d="M8.500 11l2 2 3-4" stroke="#fff" strokeWidth="1.500" fill="none" /></svg>
        <svg width="16" height="16" viewBox="0 0 16 16"><path d="M0 0h11v8H0z" fill="#e8361f" stroke="#222" /><path d="M5 6h10v7H5z" fill="#54c43a" stroke="#222" /><path d="M8 14h5v2H8z" fill="#111" /><path d="M1 10h4v3H2z" fill="#2b8ad8" /></svg>
        <svg width="16" height="16" viewBox="0 0 16 16"><path d="M0 0h16v16H0z" fill="#f2e9e6" /><path d="M1 0h4v6l6-6h4L8 8l3 5-3 3-4-6-3 4z" fill="#d2202a" /><path d="M10 7l6 9H5z" fill="#f3c535" stroke="#8f6d13" strokeWidth=".7" /><path d="M10.500 10v3m0 1v1" stroke="#222" /></svg>
        <svg width="16" height="16" viewBox="0 0 16 16"><rect width="16" height="16" rx="2" fill="#f3f6fa" /><text x="8" y="14" fontSize="16" fontWeight="700" fill="#121280" textAnchor="middle" fontFamily="Liberation Sans">ti</text><path d="M11 0h3v3h-3zM8 4h3v3H8z" fill="#32d13a" /></svg>
        <svg width="16" height="16" viewBox="0 0 16 16"><path d="M8 0l6 2c0 7-1 11-6 14C3 13 2 9 2 2z" fill="#2276b8" stroke="#8fc0e5" strokeWidth=".7" /><circle cx="8" cy="7" r="4" fill="#f08a24" /><path d="M8 5v5" stroke="#fff" strokeWidth="1.500" /></svg>
        <svg width="16" height="16" viewBox="0 0 16 16" fill="none" stroke="#fff"><path d="M5 4h10v8H5zM10 12v3M7 15h7" strokeWidth="1.500" /><path d="M1 1v4h4V1M3 5v8" /></svg>
        <svg width="16" height="16" viewBox="0 0 16 16"><path d="M0 5h3l5-5v15l-5-5H0z" fill="#f0f3f7" stroke="#59687c" strokeWidth=".6" /><circle cx="11" cy="11" r="4" fill="#fff" stroke="#df2a26" strokeWidth="2" /><path d="M8 8l6 6" stroke="#df2a26" strokeWidth="2" /></svg>
      </TrayIcons>
      <Clock>16:26<br />12.04.2019</Clock>
      <ShowDesktop aria-label="Свернуть все окна" />
    </Tray>
  </Taskbar>
);

export default function App() {
  return (
    <Screen>
      <Global />
      <BrowserFrame />
      <Viewport>
        <Canvas>
          <Page>
            <SiteHeader />
            <ContractCard />
            <PageFooter />
          </Page>
          <Smudge width="125" height="295" viewBox="0 0 125 295">
            <path d="M0 14l20-1 14-6h47l7 4v23h7v24h26v8l-26 5-1 96-7 30-7 51 8 5v8l-13 1v9l-14 1v10l-20 5-21 1H0z" fill="#fff" />
            <path d="M57 142v5m-2 8v5M14 189v-6l1-5M49 187h4m1-2v5m-5 9l-1 9m3-9v8m-4 4l1 7m2-7v3" stroke="#909090" fill="none" />
            <path d="M14 89v3M57 147l-2 8M47 199v8M49 192h4" stroke="#ccc" fill="none" />
          </Smudge>
        </Canvas>
        <Scrollbar>
          <svg width="12" height="16" viewBox="0 0 12 16" fill="none" stroke="#555" strokeWidth="3"><path d="M1 11l5-6 5 6" /></svg>
          <ScrollThumb />
          <svg width="12" height="16" viewBox="0 0 12 16" fill="none" stroke="#555" strokeWidth="3"><path d="M1 5l5 6 5-6" /></svg>
        </Scrollbar>
      </Viewport>
      <TaskbarArea />
    </Screen>
  );
}
